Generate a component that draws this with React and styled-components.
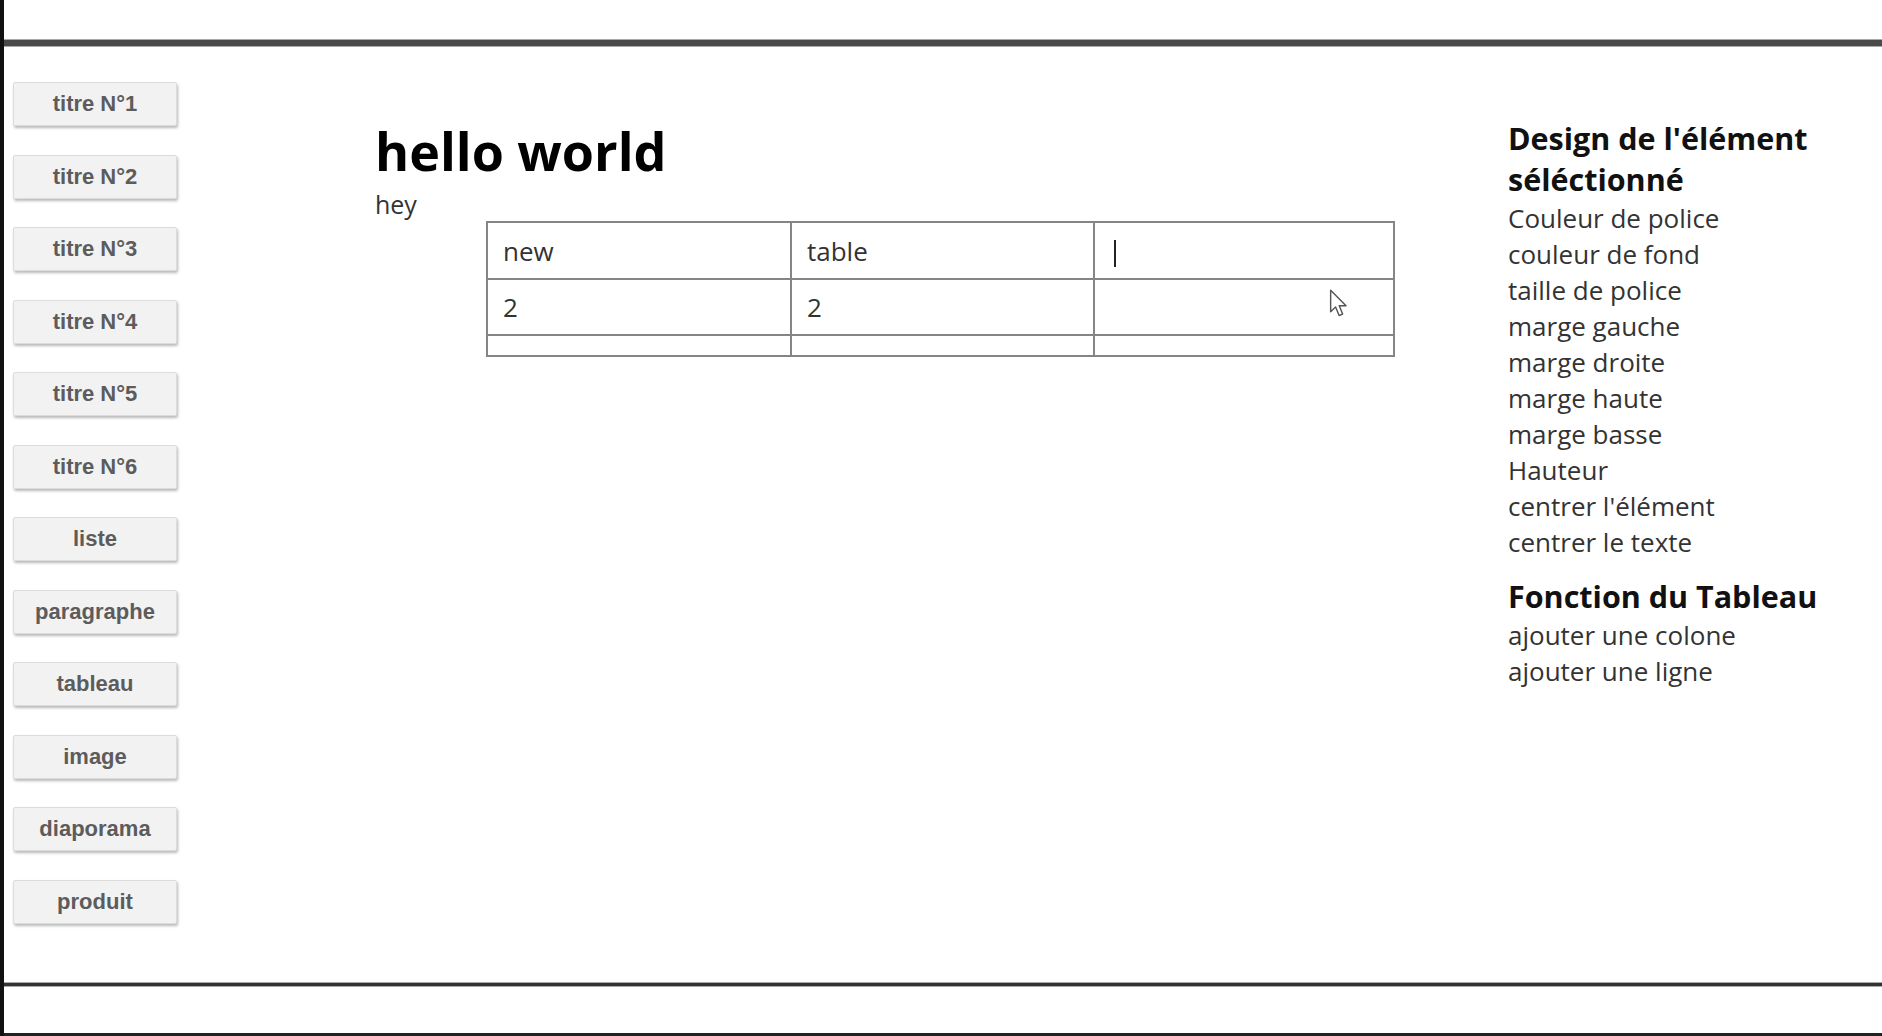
import React from 'react';
import styled, { createGlobalStyle } from 'styled-components';

const GlobalStyle = createGlobalStyle`
  html, body {
    margin: 0;
    padding: 0;
    background: #fff;
  }
  body {
    font-family: 'Open Sans', 'Noto Sans', sans-serif;
    color: #333;
  }
`;

const Frame = styled.div`
  height: 1036px;
  border-left: 4px solid #111;
  display: flex;
  flex-direction: column;
  box-sizing: border-box;
  overflow: hidden;
`;

const TopSpace = styled.div`
  height: 39px;
`;

const Rule = styled.div`
  height: ${(props) => props.size}px;
  background: ${(props) => props.color};
  border-top: 1px solid #aaa;
  border-bottom: 1px solid #aaa;
  flex-shrink: 0;
`;

const Workspace = styled.div`
  flex: 1;
  display: flex;
  min-height: 0;
`;

const Sidebar = styled.nav`
  width: 371px;
  flex-shrink: 0;
  padding: 35px 0 0 9px;
  box-sizing: border-box;
  display: flex;
  flex-direction: column;
  align-items: flex-start;
  gap: 28.5px;
`;

const ToolButton = styled.button`
  width: 164px;
  height: 44px;
  background: #f2f2f2;
  border: 1px solid #dcdcdc;
  border-radius: 2px;
  box-shadow: 1px 2px 3px rgba(0, 0, 0, 0.28);
  font-family: 'Liberation Sans', Arial, sans-serif;
  font-weight: bold;
  font-size: 22px;
  color: #5c5c5c;
  cursor: pointer;
  padding: 0;
`;

const Editor = styled.main`
  width: 1133px;
  flex-shrink: 0;
  padding-top: 68px;
  box-sizing: border-box;
`;

const Title = styled.h1`
  margin: 0;
  font-size: 52px;
  font-weight: 700;
  color: #000;
  line-height: 71px;
`;

const Paragraph = styled.p`
  margin: 3px 0 0;
  font-size: 25px;
  line-height: 31px;
  color: #333;
`;

const Table = styled.table`
  margin: 1px 0 0 111px;
  border-collapse: collapse;
  table-layout: fixed;
  width: 907px;
  font-size: 26px;
  color: #333;
`;

const Cell = styled.td`
  border: 2px solid #858585;
  height: ${(props) => props.h}px;
  padding: 0 0 0 15px;
  box-sizing: border-box;
  position: relative;
  vertical-align: middle;
`;

const Caret = styled.span`
  display: inline-block;
  width: 2px;
  height: 27px;
  background: #222;
  vertical-align: middle;
  margin-left: 4px;
`;

const Pointer = styled.svg`
  position: absolute;
  left: 234px;
  top: 8px;
`;

const Panel = styled.aside`
  flex: 1;
  padding: 71px 20px 0 0;
`;

const PanelTitle = styled.h2`
  margin: ${(props) => (props.first ? '0' : '16px 0 0')};
  font-size: 30.5px;
  line-height: 41px;
  font-weight: 700;
  color: #111;
  width: 350px;
`;

const PanelList = styled.ul`
  list-style: none;
  margin: 0;
  padding: 0;
`;

const PanelItem = styled.li`
  font-size: 26px;
  line-height: 36px;
  color: #333;
  cursor: pointer;
`;

const Footer = styled.div`
  height: 46px;
  border-bottom: 3px solid #222;
  flex-shrink: 0;
`;

const tools = [
  'titre N°1',
  'titre N°2',
  'titre N°3',
  'titre N°4',
  'titre N°5',
  'titre N°6',
  'liste',
  'paragraphe',
  'tableau',
  'image',
  'diaporama',
  'produit',
];

const designItems = [
  'Couleur de police',
  'couleur de fond',
  'taille de police',
  'marge gauche',
  'marge droite',
  'marge haute',
  'marge basse',
  'Hauteur',
  "centrer l'élément",
  'centrer le texte',
];

const tableItems = ['ajouter une colone', 'ajouter une ligne'];

const App = () => {
  return (
    <>
      <GlobalStyle />
      <Frame>
        <TopSpace />
        <Rule size={6} color='#4a4a4a' />
        <Workspace>
          <Sidebar>
            {tools.map((t) => (
              <ToolButton key={t}>{t}</ToolButton>
            ))}
          </Sidebar>
          <Editor>
            <Title>hello world</Title>
            <Paragraph>hey</Paragraph>
            <Table>
              <colgroup>
                <col style={{ width: '304px' }} />
                <col style={{ width: '303px' }} />
                <col style={{ width: '300px' }} />
              </colgroup>
              <tbody>
                <tr>
                  <Cell h={57}>new</Cell>
                  <Cell h={57}>table</Cell>
                  <Cell h={57}>
                    <Caret />
                  </Cell>
                </tr>
                <tr>
                  <Cell h={56}>2</Cell>
                  <Cell h={56}>2</Cell>
                  <Cell h={56}>
                    <Pointer width='22' height='32' viewBox='0 0 20 28'>
                      <path
                        d='M1.5 1.5 L1.5 21 L6 16.8 L9.2 24.5 L12.4 23.1 L9.3 15.6 L15.5 15.6 Z'
                        fill='#fff'
                        stroke='#555'
                        strokeWidth='1.3'
                        strokeLinejoin='round'
                      />
                    </Pointer>
                  </Cell>
                </tr>
                <tr>
                  <Cell h={21} />
                  <Cell h={21} />
                  <Cell h={21} />
                </tr>
              </tbody>
            </Table>
          </Editor>
          <Panel>
            <PanelTitle first>Design de l'élément séléctionné</PanelTitle>
            <PanelList>
              {designItems.map((d) => (
                <PanelItem key={d}>{d}</PanelItem>
              ))}
            </PanelList>
            <PanelTitle>Fonction du Tableau</PanelTitle>
            <PanelList>
              {tableItems.map((d) => (
                <PanelItem key={d}>{d}</PanelItem>
              ))}
            </PanelList>
          </Panel>
        </Workspace>
        <Rule size={3} color='#333' />
        <Footer />
      </Frame>
    </>
  );
};

export default App;
